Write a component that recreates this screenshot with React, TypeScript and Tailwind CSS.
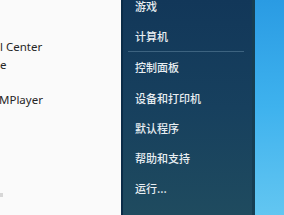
import React from "react";

export default function App() {
  const items1 = ["游戏", "计算机"];
  const items2 = ["控制面板", "设备和打印机", "默认程序", "帮助和支持", "运行..."];
  return (
    <div className="w-[284px] h-[215px] overflow-hidden flex bg-white">
      {/* left white pane */}
      <div
        className="w-[121px] h-full bg-[#fafafa] flex flex-col pt-[38px] text-[11.5px] text-[#262626] relative"
        style={{ fontFamily: '"Noto Sans", "Open Sans", sans-serif' }}
      >
        <div className="h-[18px] flex items-center">l Center</div>
        <div className="h-[18px] flex items-center">e</div>
        <div className="h-[17px]" />
        <div className="h-[18px] flex items-center -ml-[1px]">MPlayer</div>
        <div className="flex-1" />
        <div className="h-[4px] w-[3px] bg-[#c8c8c8] mb-[18px] opacity-70" />
      </div>
      {/* dark start pane */}
      <div
        className="w-[134px] h-full flex flex-col border-l-2 border-l-[#0b2c48] border-r-[3px] border-r-[#163e52] bg-gradient-to-b from-[#123759] via-[#17405e] to-[#1f4b5f] text-[11px] font-medium text-[#e8eef2]"
        style={{ fontFamily: '"Noto Sans CJK SC", "Noto Sans", sans-serif' }}
      >
        <div className="h-[13px] flex items-center pl-[12px] leading-none">{items1[0]}</div>
        <div className="h-[30px] mt-[8px] flex items-center pl-[12px]">{items1[1]}</div>
        <div className="h-px ml-[5px] mr-[8px] bg-[#3d6380]" />
        <div className="h-[31px] flex items-center pl-[12px]">{items2[0]}</div>
        {items2.slice(1).map((t) => (
          <div key={t} className="h-[30px] flex items-center pl-[12px]">
            {t}
          </div>
        ))}
      </div>
      {/* desktop */}
      <div className="flex-1 h-full bg-gradient-to-b from-[#2a9be3] via-[#3eb2ee] to-[#62c6f1]" />
    </div>
  );
}
